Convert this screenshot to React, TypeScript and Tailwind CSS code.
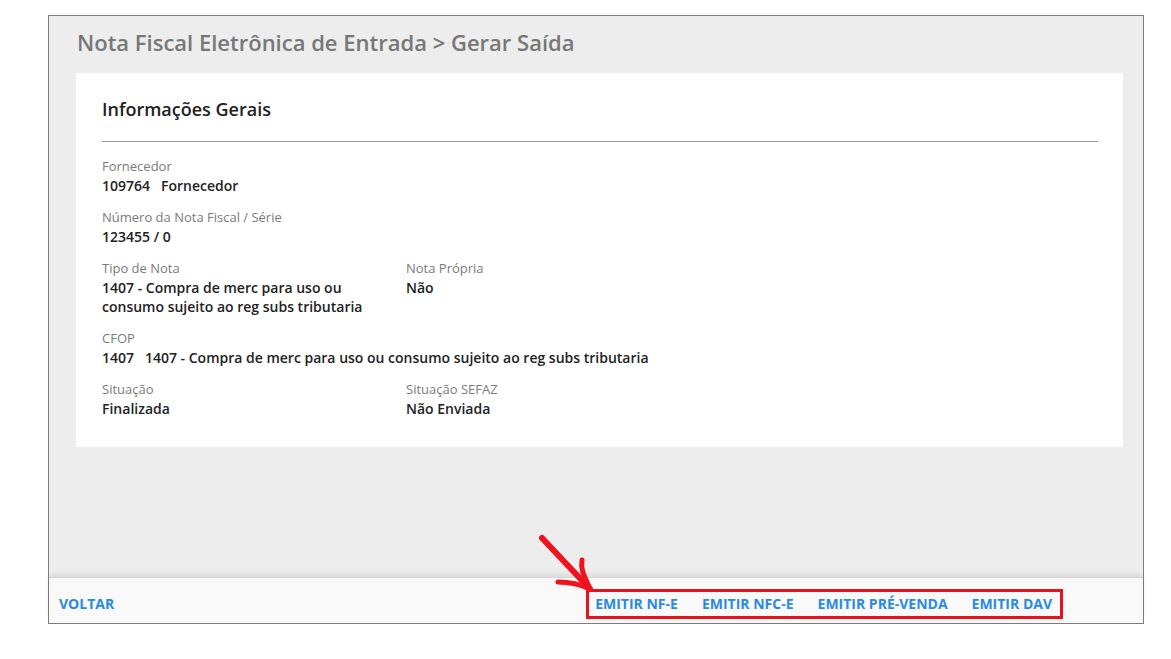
type FieldProps = {
    label: string;
    value: React.ReactNode;
}

function Field({label, value}: FieldProps){
    return(
        <div className="flex flex-col">
            <span className="text-[13px] leading-[19px] text-[#7a7a7a]">{label}</span>
            <span className="text-[14px] leading-[19px] font-semibold text-[#222]">{value}</span>
        </div>
    )
}

export default function App(){
    return(
        <div className="relative min-h-[659px] w-[1171px] bg-white pt-[15px] pl-[48px]" style={{fontFamily: '"Open Sans", "Noto Sans", sans-serif'}}>
            <div className="flex h-[609px] w-[1096px] flex-col border border-[#7d7d7d]">
                {/*Conteudo*/}
                <div className="flex-1 bg-[#ededed] pl-[27px]">
                    <h1 className="pt-[11px] pl-[1px] text-[22px] leading-[30px] font-semibold text-[#777]">
                        Nota Fiscal Eletrônica de Entrada &gt; Gerar Saída
                    </h1>

                    {/*Card*/}
                    <div className="mt-[16px] w-[1047px] bg-white px-[26px] pt-[24px] pb-[29px]">
                        <h2 className="text-[18px] leading-[25px] font-semibold text-[#222]">Informações Gerais</h2>
                        <div className="mt-[19px] mr-[-1px] h-px bg-[#9a9a9a]"></div>

                        <div className="mt-[15px] flex flex-col gap-[13px]">
                            <Field label="Fornecedor" value={<>109764&nbsp;&nbsp;&nbsp;Fornecedor</>}/>
                            <Field label="Número da Nota Fiscal / Série" value="123455 / 0"/>
                            <div className="flex">
                                <div className="w-[304px] pr-[15px]">
                                    <Field label="Tipo de Nota" value="1407 - Compra de merc para uso ou consumo sujeito ao reg subs tributaria"/>
                                </div>
                                <Field label="Nota Própria" value="Não"/>
                            </div>
                            <Field label="CFOP" value={<>1407&nbsp;&nbsp;&nbsp;1407 - Compra de merc para uso ou consumo sujeito ao reg subs tributaria</>}/>
                            <div className="flex">
                                <div className="w-[304px]">
                                    <Field label="Situação" value="Finalizada"/>
                                </div>
                                <Field label="Situação SEFAZ" value="Não Enviada"/>
                            </div>
                        </div>
                    </div>
                </div>

                {/*Rodape*/}
                <div className="flex h-[46px] items-center justify-between border-t border-[#d6d6d6] bg-[#f9f9f9] pt-[6px] pl-[10px] pr-[80px] shadow-[0_-3px_4px_rgba(0,0,0,0.07)]">
                    <button className="text-[14px] font-bold text-[#2a8ae2]">VOLTAR</button>
                    <div className="flex h-[30px] items-center gap-[24px] border-[3px] border-[#e5131b] pl-[6px] pr-[8px]">
                        <button className="text-[14px] font-bold text-[#2a8ae2]">EMITIR NF-E</button>
                        <button className="text-[14px] font-bold text-[#2a8ae2]">EMITIR NFC-E</button>
                        <button className="text-[14px] font-bold text-[#2a8ae2]">EMITIR PRÉ-VENDA</button>
                        <button className="text-[14px] font-bold text-[#2a8ae2]">EMITIR DAV</button>
                    </div>
                </div>
            </div>

            {/*Seta de destaque*/}
            <svg className="absolute left-[535px] top-[530px]" width="66" height="66" viewBox="0 0 66 66" fill="none">
                <path d="M7 8 L55 59" stroke="#f0121c" strokeWidth="6" strokeLinecap="round"/>
                <path d="M47 30 C45 42 52 50 55 59" stroke="#f0121c" strokeWidth="5" strokeLinecap="round"/>
                <path d="M23 52 C35 52 47 55 55 59" stroke="#f0121c" strokeWidth="5" strokeLinecap="round"/>
            </svg>
        </div>
    )
}
